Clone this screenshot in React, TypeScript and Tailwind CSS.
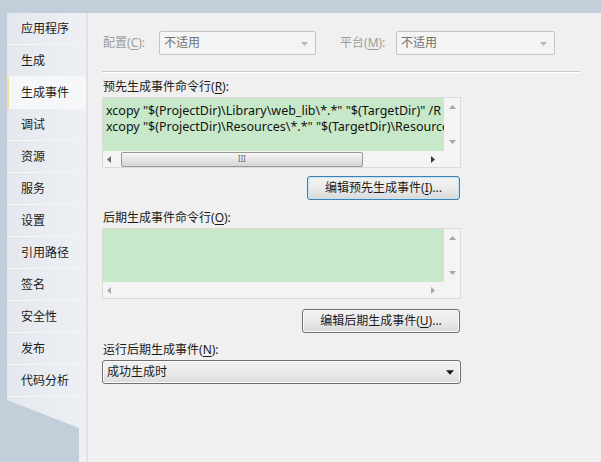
import React from 'react'

const FONT = "font-['Noto_Sans','Noto_Sans_CJK_SC',sans-serif]"

const tabs = ['应用程序', '生成', '生成事件', '调试', '资源', '服务', '设置', '引用路径', '签名', '安全性', '发布', '代码分析']

function Arrow({ dir, color = '#8a8a8a', size = 7 }: { dir: 'up' | 'down' | 'left' | 'right'; color?: string; size?: number }) {
  const pts = {
    up: '0,5 3.5,1 7,5',
    down: '0,2 3.5,6 7,2',
    left: '5,0 1,3.5 5,7',
    right: '2,0 6,3.5 2,7',
  }[dir]
  return (
    <svg width={size} height={size} viewBox="0 0 7 7">
      <polygon points={pts} fill={color} />
    </svg>
  )
}

function Label({ text, k, tail = '):', disabled = false }: { text: string; k: string; tail?: string; disabled?: boolean }) {
  return (
    <span className={`text-[12px] leading-[16px] whitespace-nowrap ${disabled ? 'text-[#9d9d9d]' : 'text-[#1a1a1a]'}`}>
      {text}(<span className="underline underline-offset-2">{k}</span>{tail}
    </span>
  )
}

function DisabledCombo({ w }: { w: string }) {
  return (
    <div className={`${w} h-[24px] flex items-center justify-between border border-[#c5c5c5] rounded-[2px] bg-[#f4f4f4] pl-[4px] pr-[7px]`}>
      <span className="text-[12px] leading-[16px] text-[#707070]">不适用</span>
      <Arrow dir="down" color="#b5b5b5" size={7} />
    </div>
  )
}

function CommandBox({ lines, thumb }: { lines: string[]; thumb: boolean }) {
  return (
    <div className="w-[359px] h-[71px] border border-[#dadada] bg-[#f6f6f6] flex flex-col">
      <div className="flex h-[53px]">
        <div className="flex-1 bg-[#c8e9c9] overflow-hidden pl-[3px] pt-[5px]">
          {lines.map((l, i) => (
            <div key={i} className="text-[12.5px] leading-[16px] whitespace-nowrap text-[#111]">{l}</div>
          ))}
        </div>
        <div className="w-[16px] flex flex-col items-center justify-between py-[6px] bg-[#f4f4f4]">
          <Arrow dir="up" color="#a8a8a8" />
          <Arrow dir="down" color="#a8a8a8" />
        </div>
      </div>
      <div className="flex flex-1">
        <div className="flex-1 flex items-center pl-[3px] pr-[8px] bg-[#f4f4f4]">
          <Arrow dir="left" color={thumb ? '#6a6a6a' : '#a8a8a8'} />
          <div className="flex-1 h-[15px] mx-[8px] flex items-center">
            {thumb && (
              <div className="w-[242px] h-[15px] border border-[#9a9a9a] rounded-[2px] bg-gradient-to-b from-[#f5f5f5] to-[#d6d6d6] flex items-center justify-center">
                <span className="text-[8px] leading-[8px] text-[#707070]">III</span>
              </div>
            )}
          </div>
          <Arrow dir="right" color={thumb ? '#3a3a3a' : '#a8a8a8'} />
        </div>
        <div className="w-[16px] bg-[#f4f4f4]" />
      </div>
    </div>
  )
}

function Button({ text, k, w, focused }: { text: string; k: string; w: string; focused?: boolean }) {
  return (
    <div
      className={`${w} h-[24px] rounded-[3px] border flex items-center justify-center bg-gradient-to-b from-[#f2f2f2] via-[#ebebeb] to-[#d9d9d9] ${
        focused ? 'border-[#3c7fb1] shadow-[inset_0_0_0_1px_#c4e5f6]' : 'border-[#707070] shadow-[inset_0_0_0_1px_#fbfbfb]'
      }`}
    >
      <Label text={text} k={k} tail=")..." />
    </div>
  )
}

export default function App() {
  return (
    <div className={`w-[601px] h-[462px] bg-[#c2ceda] flex flex-col overflow-hidden text-[12px] leading-[16px] ${FONT}`}>
      <div className="h-[13px] shrink-0" />
      <div className="flex flex-1">
        {/* tabs */}
        <div className="w-[86px] pl-[7px] flex flex-col">
          <div className="w-[79px] flex flex-col">
            {tabs.map((t, i) =>
              i === 2 ? (
                <div key={t} className="h-[32px] flex items-center pl-[12px] bg-[#f6f7f9] border-l-2 border-[#f3dc9c] w-[81px]">
                  <span className="text-[#1a1a1a]">{t}</span>
                </div>
              ) : (
                <div key={t} className="h-[32px] flex items-center pl-[14px] bg-gradient-to-r from-[#e4e8ee] to-[#eef0f4] border-b border-[#f4f5f8]">
                  <span className="text-[#1a1a1a]">{t}</span>
                </div>
              )
            )}
          </div>
          <div className="w-[79px] flex-1 bg-gradient-to-r from-[#e4e8ee] to-[#eef0f4] [clip-path:polygon(0_0,100%_0,100%_100%,72px_100%,72px_31px,0_3px)]" />
        </div>
        {/* content */}
        <div className="flex-1 bg-[#f0f0f0] border-l-2 border-[#dde3eb] pl-[14px] pt-[18px] flex flex-col">
          <div className="flex items-center">
            <div className="w-[57px] pl-[1px]">
              <Label text="配置" k="C" disabled />
            </div>
            <DisabledCombo w="w-[157px]" />
            <div className="w-[56px] ml-[24px]">
              <Label text="平台" k="M" disabled />
            </div>
            <DisabledCombo w="w-[159px]" />
          </div>
          <div className="mt-[16px] h-[1px] bg-[#c9c9c9] mr-[21px] shadow-[0_1px_0_#ffffff]" />
          <div className="mt-[7px] pl-[1px] h-[16px]">
            <Label text="预先生成事件命令行" k="R" />
          </div>
          <div className="mt-[2px]">
            <CommandBox
              thumb
              lines={[
                'xcopy "$(ProjectDir)\\Library\\web_lib\\*.*" "$(TargetDir)" /R /Y /S',
                'xcopy "$(ProjectDir)\\Resources\\*.*" "$(TargetDir)\\Resources\\" /R /Y /S',
              ]}
            />
          </div>
          <div className="w-[359px] flex justify-end mt-[8px] pr-[1px]">
            <Button text="编辑预先生成事件" k="I" w="w-[153px]" focused />
          </div>
          <div className="mt-[10px] pl-[1px] h-[16px]">
            <Label text="后期生成事件命令行" k="O" />
          </div>
          <div className="mt-[2px]">
            <CommandBox thumb={false} lines={[]} />
          </div>
          <div className="w-[359px] flex justify-end mt-[10px] pr-[1px]">
            <Button text="编辑后期生成事件" k="U" w="w-[158px]" />
          </div>
          <div className="mt-[9px] pl-[1px] h-[16px]">
            <Label text="运行后期生成事件" k="N" />
          </div>
          <div className="mt-[2px] w-[359px] h-[24px] rounded-[3px] border border-[#707070] bg-gradient-to-b from-[#f2f2f2] via-[#ebebeb] to-[#dcdcdc] shadow-[inset_0_0_0_1px_#fbfbfb] flex items-center justify-between pl-[4px] pr-[6px]">
            <span className="text-[#1a1a1a]">成功生成时</span>
            <Arrow dir="down" color="#1a1a1a" size={8} />
          </div>
        </div>
      </div>
    </div>
  )
}
